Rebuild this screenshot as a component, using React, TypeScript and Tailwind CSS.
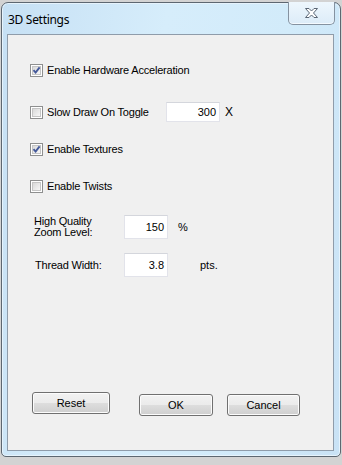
import React from "react";

function CheckBox({ checked }: { checked: boolean }) {
  return (
    <div className="w-[13px] h-[13px] border border-[#8e8f8f] bg-white p-[1px] shrink-0">
      <div className="w-full h-full border border-[#c5c5c5] bg-gradient-to-br from-[#d9d9d9] to-[#f7f7f7] relative">
        {checked && (
          <svg width="9" height="9" viewBox="0 0 9 9" className="absolute -left-[1px] -top-[1px]">
            <path d="M1.5 4.2 L3.6 6.6 L7.6 1.4" fill="none" stroke="#44599a" strokeWidth="1.9" />
          </svg>
        )}
      </div>
    </div>
  );
}

function Check({ checked, label }: { checked: boolean; label: string }) {
  return (
    <div className="flex items-center h-[13px]">
      <CheckBox checked={checked} />
      <span className="ml-[4px] text-[11px] leading-[13px] tracking-[-0.2px] text-black whitespace-nowrap">
        {label}
      </span>
    </div>
  );
}

function Field({ value, w, h }: { value: string; w: string; h: string }) {
  return (
    <div
      className={`${w} ${h} bg-white border border-[#e2e3ea] border-t-[#d4d6dc] flex items-center justify-end pr-[3px] text-[11px] text-black`}
    >
      {value}
    </div>
  );
}

function Btn({ label, w }: { label: string; w: string }) {
  return (
    <div
      className={`${w} h-[22px] border border-[#707070] rounded-[3px] flex items-center justify-center text-[11px] text-black bg-[linear-gradient(to_bottom,#f2f2f2_0%,#ebebeb_50%,#dddddd_51%,#cfcfcf_100%)] shadow-[inset_0_0_0_1px_#fcfcfc]`}
    >
      {label}
    </div>
  );
}

export default function App() {
  return (
    <div className="w-[342px] h-[465px] bg-[#d3d3d3] pt-[2px] pl-[1px] font-['Liberation_Sans',Arial,sans-serif]">
      <div className="w-[340px] h-[455px] border border-[#5d6771] rounded-t-[7px] rounded-b-[5px] bg-[linear-gradient(100deg,#c6e0f4_0%,#d6edfb_40%,#d2ebfa_70%,#c9e2f5_100%)] flex flex-col pl-[5px] pr-[6px] pb-[5px] shadow-[inset_0_0_0_1px_#e6f3fc]">
        <div className="h-[31px] flex items-start justify-between shrink-0">
          <div className="ml-[1px] mt-[9px] text-[12px] leading-[16px] tracking-[-0.3px] text-black font-['Noto_Sans','Open_Sans',sans-serif]">
            3D Settings
          </div>
          <div className="-mt-[1px] -mr-[1px] w-[47px] h-[23px] border border-[#8592a0] border-t-0 rounded-b-[5px] bg-[linear-gradient(to_bottom,#eef7fd,#dcecf8)] flex items-center justify-center shadow-[inset_0_-1px_0_#f4faff]">
            <svg width="15" height="12" viewBox="0 0 15 12">
              <path
                d="M1.5 1.5 H5 L7.5 4 L10 1.5 H13.5 L9.5 6 L13.5 10.5 H10 L7.5 8 L5 10.5 H1.5 L5.5 6 Z"
                fill="#ffffff"
                stroke="#5a6675"
                strokeWidth="1"
                strokeLinejoin="round"
              />
            </svg>
          </div>
        </div>
        <div className="flex-1 border border-[#8f9caa] bg-[#f0f0f0] flex flex-col pl-[22px]">
          <div className="mt-[29px]">
            <Check checked label="Enable Hardware Acceleration" />
          </div>
          <div className="mt-[25px] h-[20px] flex items-center">
            <div className="w-[136px]">
              <Check checked={false} label="Slow Draw On Toggle" />
            </div>
            <Field value="300" w="w-[54px]" h="h-[20px]" />
            <span className="ml-[5px] text-[12px] font-light text-black">X</span>
          </div>
          <div className="mt-[21px]">
            <Check checked label="Enable Textures" />
          </div>
          <div className="mt-[24px]">
            <Check checked={false} label="Enable Twists" />
          </div>
          <div className="mt-[22px] flex items-center h-[24px]">
            <div className="ml-[4px] w-[90px] text-[11px] leading-[11px] tracking-[-0.2px] text-black">
              High Quality
              <br />
              Zoom Level:
            </div>
            <Field value="150" w="w-[44px]" h="h-[24px]" />
            <span className="ml-[10px] text-[11px] text-black">%</span>
          </div>
          <div className="mt-[14px] flex items-center h-[24px]">
            <div className="ml-[5px] w-[89px] text-[11px] tracking-[-0.2px] text-black">Thread Width:</div>
            <Field value="3.8" w="w-[44px]" h="h-[24px]" />
            <span className="ml-[32px] text-[11px] text-black">pts.</span>
          </div>
          <div className="mt-[115px] flex items-start -ml-[22px] pl-[24px]">
            <Btn label="Reset" w="w-[78px]" />
            <div className="ml-[29px] mt-[2px]">
              <Btn label="OK" w="w-[74px]" />
            </div>
            <div className="ml-[14px] mt-[2px]">
              <Btn label="Cancel" w="w-[73px]" />
            </div>
          </div>
        </div>
      </div>
    </div>
  );
}
